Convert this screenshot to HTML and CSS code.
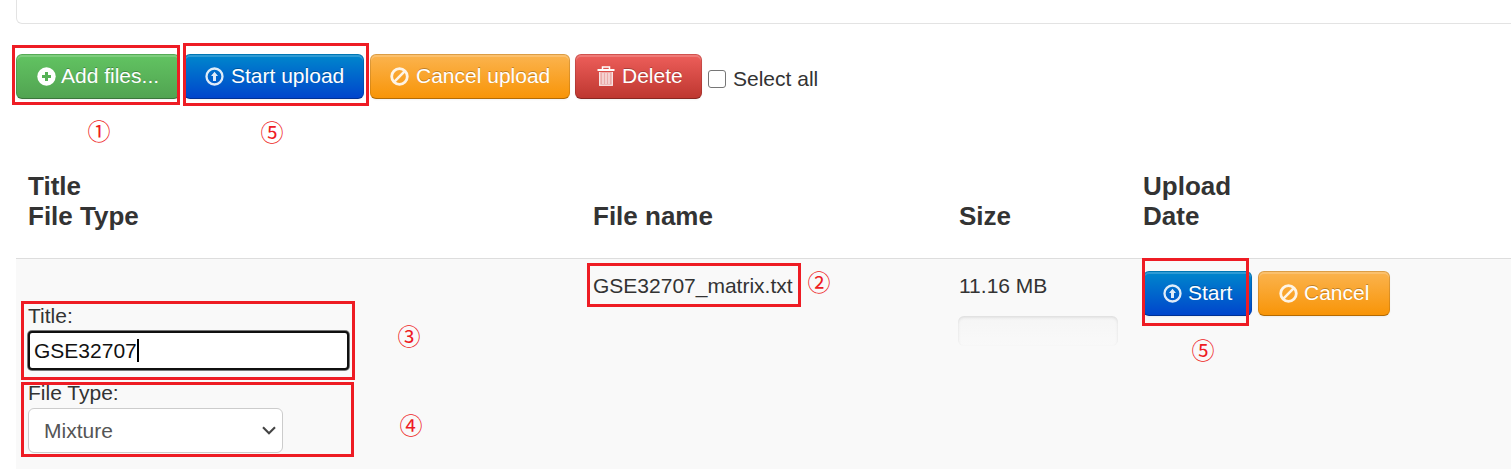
FILE: index.html
```html
<!DOCTYPE html>
<html lang="en">
<head>
<meta charset="utf-8">
<title>File upload</title>
<link rel="stylesheet" href="styles.css">
</head>
<body>
<svg class="defs" width="0" height="0" aria-hidden="true">
  <symbol id="plus" viewBox="0 0 19 19"><circle cx="9.5" cy="9.5" r="9.2" fill="#fff"/><path d="M9.5 5v9M5 9.5h9" stroke="#57b257" stroke-width="3"/></symbol>
  <symbol id="up" viewBox="0 0 19 19"><circle cx="9.5" cy="9.5" r="8" fill="none" stroke="#fff" stroke-width="2.3"/><path d="M9.5 4.8 13 9H11v5H8V9H6z" fill="#fff"/></symbol>
  <symbol id="ban" viewBox="0 0 19 19"><circle cx="9.5" cy="9.5" r="7.8" fill="none" stroke="#fff" stroke-width="2.8"/><path d="M4.2 14.8 14.8 4.2" stroke="#fff" stroke-width="2.6"/></symbol>
  <symbol id="trash" viewBox="0 0 18 20"><path d="M5.5 3.5V1h7v2.5" fill="none" stroke="#fff" stroke-width="1.5"/><path d="M.5 3h17v2H.5z" fill="#fff"/><path d="M2 6h14v14H2z" fill="#fff" opacity=".55"/><path d="M2.7 6v13.3h12.6V6M6 7v11M9 7v11M12 7v11" fill="none" stroke="#fff" stroke-width="1.1" opacity=".8"/></symbol>
</svg>
<main class="page">
  <div class="panel"></div>
  <div class="toolbar">
    <button class="btn green add"><svg class="icon"><use href="#plus"/></svg>Add files...</button>
    <button class="btn blue upload"><svg class="icon soft"><use href="#up"/></svg>Start upload</button>
    <button class="btn orange cancel-all"><svg class="icon soft"><use href="#ban"/></svg>Cancel upload</button>
    <button class="btn red delete"><svg class="icon bin"><use href="#trash"/></svg>Delete</button>
    <label class="select-all"><span class="check"></span>Select all</label>
  </div>
  <div class="row head">
    <div>Title<br>File Type</div>
    <div>File name</div>
    <div>Size</div>
    <div>Upload<br>Date</div>
  </div>
  <div class="row entry">
    <div class="fields">
      <span class="label">Title:</span>
      <div class="field">GSE32707<span class="caret"></span></div>
      <span class="label type-label">File Type:</span>
      <div class="select">Mixture<svg class="chevron" viewBox="0 0 14 9"><path d="M1 1.2l6 6 6-6" fill="none" stroke="#444" stroke-width="2.1"/></svg></div>
    </div>
    <div class="name">GSE32707_matrix.txt</div>
    <div class="size">11.16 MB<div class="progress"></div></div>
    <div class="actions">
      <button class="btn blue start"><svg class="icon soft"><use href="#up"/></svg>Start</button>
      <button class="btn orange cancel"><svg class="icon soft"><use href="#ban"/></svg>Cancel</button>
    </div>
  </div>
  <div class="mark m-add"></div><span class="num n-add">①</span>
  <div class="mark m-upload"></div><span class="num n-upload">⑤</span>
  <div class="mark m-name"></div><span class="num n-name">②</span>
  <div class="mark m-title"></div><span class="num n-title">③</span>
  <div class="mark m-type"></div><span class="num n-type">④</span>
  <div class="mark m-start"></div><span class="num n-start">⑤</span>
</main>
</body>
</html>
```
FILE: styles.css
```css
* { box-sizing: border-box; }
body { margin: 0; background: #fff; color: #333; font: 21px/30px "Liberation Sans", Arial, sans-serif; }
.defs { position: absolute; }
.page { position: relative; width: 1511px; height: 469px; overflow: hidden; padding-left: 16px; }
.panel { height: 24px; margin-right: -10px; border: 1px solid #e3e3e3; border-top: 0; border-radius: 0 0 6px 6px; }
.toolbar { display: flex; margin-top: 30px; height: 45px; }
.btn { display: flex; align-items: center; height: 45px; margin: 0; padding: 0 0 1px 20px; gap: 7px; color: #fff; font: 21px/30px "Liberation Sans", Arial, sans-serif; white-space: nowrap; text-shadow: 0 -1px 0 rgba(0,0,0,.25); border: 1px solid; border-color: rgba(0,0,0,.12) rgba(0,0,0,.12) rgba(0,0,0,.28); border-radius: 6px; background-origin: border-box; box-shadow: inset 0 2px 0 rgba(255,255,255,.18), 0 1px 2px rgba(0,0,0,.05); }
.green { background-image: linear-gradient(#62c462, #51a351); }
.blue { background-image: linear-gradient(#08c, #04c); }
.orange { background-image: linear-gradient(#fbb450, #f89406); }
.red { background-image: linear-gradient(#ee5f5b, #bd362f); }
.icon { width: 19px; height: 19px; flex: none; }
.soft { opacity: .88; }
.bin { width: 18px; height: 20px; }
.add { width: 164px; gap: 5px; }
.upload { width: 180px; margin-left: 4px; }
.cancel-all { width: 200px; margin-left: 6px; padding-left: 19px; }
.delete { width: 127px; margin-left: 5px; padding-left: 21px; gap: 7px; }
.select-all { display: flex; align-items: center; gap: 7px; margin-left: 6px; padding-top: 5px; }
.check { width: 18px; height: 18px; border: 1.5px solid #767676; border-radius: 3px; background: #fff; }
.row { display: grid; grid-template-columns: 565px 366px 184px 1fr; }
.row > div { padding-left: 12px; }
.head { height: 160px; padding-bottom: 27px; align-items: end; font-size: 26px; font-weight: bold; border-bottom: 1px solid #ddd; }
.entry { height: 210px; background: #f9f9f9; align-items: start; }
.fields { display: flex; flex-direction: column; padding-top: 42px; }
.field { display: flex; align-items: center; width: 321px; height: 39px; padding-left: 4px; color: #111; background: #fff; border: 2px solid #101010; border-radius: 4px; box-shadow: 0 0 0 1px #777; }
.caret { width: 2px; height: 23px; background: #000; }
.type-label { margin-top: 8px; }
.select { display: flex; align-items: center; justify-content: space-between; width: 255px; height: 45px; padding: 0 6px 0 15px; background: #fff; border: 1px solid #ccc; border-radius: 6px; color: #555; }
.chevron { width: 14px; height: 9px; }
.name, .size { padding-top: 12px; }
.progress { width: 160px; height: 30px; margin: 15px 0 0 -1px; border-radius: 6px; background: linear-gradient(#f5f5f5, #f9f9f9); box-shadow: inset 0 1.5px 3px rgba(0,0,0,.1); }
.actions { display: flex; gap: 6px; padding-top: 12px; }
.start { width: 109px; padding-left: 19px; gap: 6px; }
.cancel { width: 132px; gap: 6px; }
.mark { position: absolute; border: 3px solid #ee1c24; }
.m-add { left: 12px; top: 45px; width: 168px; height: 60px; }
.m-upload { left: 183px; top: 43px; width: 186px; height: 63px; }
.m-name { left: 587px; top: 263px; width: 214px; height: 44px; }
.m-title { left: 21px; top: 301px; width: 334px; height: 79px; }
.m-type { left: 21px; top: 382px; width: 333px; height: 75px; }
.m-start { left: 1142px; top: 258px; width: 107px; height: 68px; }
.num { position: absolute; width: 24px; height: 24px; color: #ee1c24; font: 23px/24px "Noto Sans CJK SC", sans-serif; text-align: center; }
.n-add { left: 87px; top: 118px; }
.n-upload { left: 260px; top: 119px; }
.n-name { left: 807px; top: 269px; }
.n-title { left: 397px; top: 323px; }
.n-type { left: 399px; top: 412px; }
.n-start { left: 1191px; top: 337px; }
```
